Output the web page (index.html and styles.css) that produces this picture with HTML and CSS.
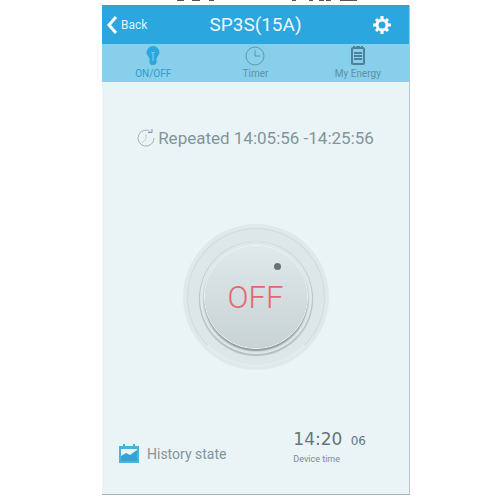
FILE: index.html
```
<!DOCTYPE html>
<html lang="en">
<head>
    <meta charset="UTF-8">
    <meta name="viewport" content="width=device-width, initial-scale=1.0">
    <title>SP3S(15A)</title>
    <link rel="stylesheet" href="styles.css">
</head>
<body>
    <svg class="strip" width="308" height="5" viewBox="0 0 308 5" aria-hidden="true">
        <path d="M75 0h7M90 0h8M107 0h5M190 0h4M207 0h4M217 0h5M224 0h5M238 0h17"/>
    </svg>
    <main class="phone">
        <header class="topbar">
            <button class="back" type="button">
                <svg width="12" height="18" viewBox="0 0 12 18"><path d="M10 1 3 9l7 8"/></svg>
                <span>Back</span>
            </button>
            <h1>SP3S(15A)</h1>
            <button class="settings" type="button" aria-label="Settings">
                <svg width="18" height="18" viewBox="0 0 18 18">
                    <circle cx="9" cy="9" r="5"/>
                    <path d="M9 0v3M9 15v3M0 9h3M15 9h3M3 3l2 2M13 13l2 2M15 3l-2 2M5 13l-2 2"/>
                </svg>
            </button>
        </header>
        <nav class="tabs">
            <a class="tab active" href="#">
                <svg width="22" height="20" viewBox="0 0 22 20">
                    <path class="bulb" d="M11 0a6.5 6.5 0 0 0-6.5 6.500c0 3 3 4 3 7V17l1.500 2h4l1.500-2v-3.500c0-3 3-4 3-7A6.500 6.500 0 0 0 11 0z"/>
                    <path class="filament" d="M11 7v8M9.500 6.500h3"/>
                </svg>
                <span>ON/OFF</span>
            </a>
            <a class="tab" href="#">
                <svg width="22" height="20" viewBox="0 0 22 20">
                    <circle cx="11" cy="10" r="9"/>
                    <path d="M11 4v6h5"/>
                </svg>
                <span>Timer</span>
            </a>
            <a class="tab" href="#">
                <svg class="list" width="22" height="20" viewBox="0 0 22 20">
                    <rect x="5" y="2" width="12" height="16" rx="1"/>
                    <path d="M7 0v3M10 0v3M12 0v3M15 0v3M7 7h8M7 10h8M7 13h8"/>
                </svg>
                <span>My Energy</span>
            </a>
        </nav>
        <section class="schedule">
            <svg width="18" height="18" viewBox="0 0 18 18">
                <path d="M13.500 2.500A8 8 0 1 0 17 9"/>
                <path class="faint" d="M9 5v5l-4 4"/>
                <path class="arrow" d="M11 3.500h4V0"/>
            </svg>
            <span>Repeated 14:05:56 -14:25:56</span>
        </section>
        <section class="power">
            <button class="dial" type="button">
                <span class="ring"><span class="knob">OFF</span></span>
            </button>
        </section>
        <footer class="bottom">
            <a class="history" href="#">
                <svg width="20" height="20" viewBox="0 0 20 20">
                    <path class="frame" d="M1 3h18v15H1zM1 4h18"/>
                    <path class="hooks" d="M5 0v4M15 0v4"/>
                    <path class="chart" d="M2 12l5-3 4 2 7-5v11H2z"/>
                </svg>
                <span>History state</span>
            </a>
            <div class="device">
                <div class="clock">14:20 <small>06</small></div>
                <p>Device time</p>
            </div>
        </footer>
    </main>
</body>
</html>
```
FILE: styles.css
```
*{
    padding: 0;
    margin: 0;
    box-sizing: border-box;
}
body{
    min-height: 100vh;
    padding: 0 90px 5px 102px;
    display: flex;
    flex-direction: column;
    background-color: #fff;
    font-family: Roboto, "Liberation Sans", sans-serif;
}
button{
    border: none;
    background: none;
    font-family: inherit;
    cursor: pointer;
}
a{
    text-decoration: none;
}
svg{
    display: block;
    fill: none;
}
.strip{
    stroke: #555;
    stroke-width: 2;
}
.phone{
    flex: 1;
    display: flex;
    flex-direction: column;
    background-color: #eaf4f7;
    border-right: 1px solid #b9c3c8;
    border-bottom: 1px solid #a9b2b8;
}
.topbar{
    display: grid;
    grid-template-columns: 1fr auto 1fr;
    align-items: center;
    height: 39px;
    padding: 0 4px;
    background-color: #2ca6de;
    color: #eaf8ff;
}
.topbar h1{
    font-size: 19px;
    font-weight: 400;
}
.back{
    display: flex;
    align-items: center;
    gap: 3px;
    color: #dff4fd;
    font-size: 12px;
}
.back svg{
    stroke: #fff;
    stroke-width: 3;
}
.settings{
    justify-self: end;
    margin-right: 14px;
}
.settings svg{
    stroke: #fff;
    stroke-width: 3;
}
.tabs{
    display: grid;
    grid-template-columns: repeat(3, 1fr);
    height: 38px;
    background-color: #87cfeb;
}
.tab{
    display: flex;
    flex-direction: column;
    align-items: center;
    gap: 1px;
    padding-top: 2px;
    color: #5f90a5;
    font-size: 10px;
    line-height: 13px;
}
.tab svg{
    stroke: #6494a8;
    stroke-width: 1;
}
.tab .list{
    stroke: #4f8299;
    stroke-width: 2;
}
.tab.active{
    color: #2b9dd2;
}
.tab .bulb{
    fill: #2ca6de;
    stroke: none;
}
.tab .filament{
    stroke: #87cfeb;
}
.schedule{
    display: flex;
    align-items: center;
    justify-content: center;
    gap: 3px;
    padding-top: 46px;
    color: #82949a;
    font-size: 17px;
    line-height: 20px;
}
.schedule svg{
    stroke: #a3b2b7;
    stroke-width: 1;
}
.schedule .faint{
    stroke: #c0cdd1;
}
.schedule .arrow{
    stroke: #82949a;
}
.power{
    flex: 1;
    display: flex;
    justify-content: center;
    padding-top: 76px;
}
.dial{
    width: 146px;
    height: 146px;
    padding: 4px;
    border-radius: 50%;
    background-color: #dfe8ea;
}
.ring{
    display: flex;
    align-items: center;
    justify-content: center;
    height: 138px;
    border: 1px solid #d0dadd;
    border-bottom-color: #e6eef0;
    border-radius: 50%;
    background-color: #dde7e9;
}
.knob{
    position: relative;
    width: 102px;
    height: 102px;
    border-radius: 50%;
    background: linear-gradient(#dfe8ea, #c8d3d6);
    box-shadow: 0 0 0 1px #edf4f5, 0 2px 2px 1px #879194, 0 1px 0 5px #dfe8ea, 0 2px 1px 6px #b4c0c3;
    color: #e36870;
    font-size: 31px;
    font-weight: 300;
    line-height: 104px;
}
.knob::after{
    content: "";
    position: absolute;
    top: 17px;
    right: 26px;
    width: 7px;
    height: 7px;
    border-radius: 50%;
    background-color: #687276;
}
.bottom{
    display: flex;
    justify-content: space-between;
    align-items: flex-start;
    padding: 0 43px 29px 17px;
}
.history{
    display: flex;
    align-items: center;
    gap: 8px;
    padding-top: 15px;
    color: #82949a;
    font-size: 14px;
    line-height: 20px;
}
.history .frame{
    stroke: #4db1dc;
    stroke-width: 2;
}
.history .hooks{
    stroke: #4db1dc;
    stroke-width: 2;
}
.history .chart{
    fill: #34a3d6;
}
.clock{
    color: #64757c;
    font-family: "DejaVu Sans", sans-serif;
    font-size: 17px;
    line-height: 20px;
}
.clock small{
    margin-left: 3px;
    font-size: 12px;
}
.device p{
    color: #7c8c92;
    font-size: 9px;
    line-height: 12px;
    padding-top: 2px;
}
```
